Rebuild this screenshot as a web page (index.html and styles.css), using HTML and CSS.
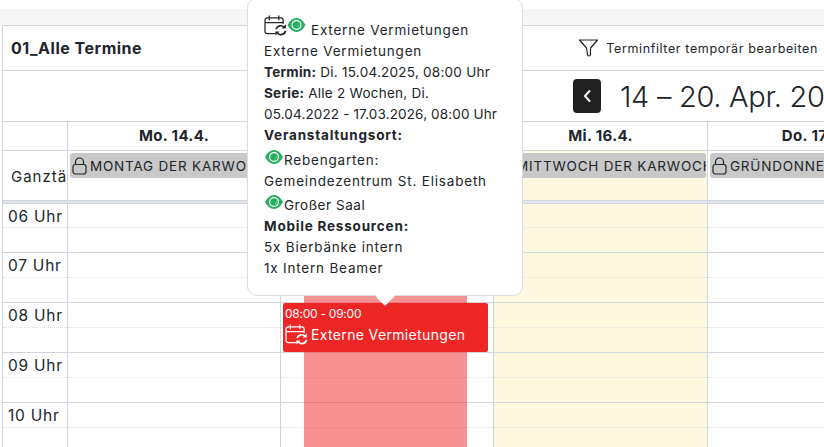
FILE: index.html
```html
<!DOCTYPE html>
<html lang="de">
<head>
<meta charset="utf-8">
<title>Kalender</title>
<link rel="stylesheet" href="styles.css">
</head>
<body>
<svg class="defs" width="0" height="0" aria-hidden="true">
  <symbol id="calsync" viewBox="0 0 24 22">
    <path d="M11 19.5H3.5A2.5 2.5 0 0 1 1 17V5.5A2.5 2.5 0 0 1 3.5 3h14A2.5 2.5 0 0 1 20 5.5V9M1 8h19M5.5 1v4M15.5 1v4" fill="none" stroke="currentColor" stroke-width="1.3" stroke-linecap="round"/>
    <path d="M12.6 15a5 5 0 0 1 8.4-2.2M22.6 16.5a5 5 0 0 1-8.6 2.4" fill="none" stroke="currentColor" stroke-width="1.8"/>
    <path d="M22.8 9.8v4.4h-4.4zM11.8 21.6v-4.4h4.4z" fill="currentColor"/>
  </symbol>
  <symbol id="eye" viewBox="0 0 18 14">
    <path d="M0 7C2.5 2.5 5.5 0 9 0s6.500 2.500 9 7c-2.500 4.500-5.500 7-9 7S2.500 11.500 0 7z" fill="#27ae60"/>
    <circle cx="9" cy="7" r="5" fill="#fff"/>
    <circle cx="9" cy="7" r="3.800" fill="#27ae60"/>
    <path d="M11.200 4.800a3 3 0 0 1-1.600 4.400 3.800 3.800 0 0 0 1.600-4.400z" fill="#fff"/>
  </symbol>
  <symbol id="lock" viewBox="0 0 15 18">
    <path d="M3.500 7.500V5a4 4 0 0 1 8 0v2.500" fill="none" stroke="currentColor" stroke-width="1.200"/>
    <rect x="1" y="7.500" width="13" height="9.500" rx="2.200" fill="none" stroke="currentColor" stroke-width="1.200"/>
  </symbol>
</svg>

<div class="page">
  <div class="band"></div>
  <div class="cal">
    <header class="titlebar">
      <h1 class="title">01_Alle Termine</h1>
      <button class="filter" type="button">
        <svg class="filter-icon" viewBox="0 0 20 18"><path d="M1 1h18l-7 8v6.500a1.500 1.500 0 0 1-3 0L8 9z" fill="none" stroke="currentColor" stroke-width="1.200" stroke-linejoin="round"/></svg>
        Terminfilter temporär bearbeiten
      </button>
    </header>
    <nav class="navbar">
      <button class="prev" type="button" aria-label="Zurück">
        <svg viewBox="0 0 10 14" width="10" height="14"><path d="M7.500 2 3 7l4.500 5" fill="none" stroke="#fff" stroke-width="2" stroke-linecap="round" stroke-linejoin="round"/></svg>
      </button>
      <h2 class="range">14 – 20. Apr. 2025</h2>
    </nav>

    <div class="grid head">
      <div class="corner"></div>
      <div class="dayname">Mo. 14.4.</div>
      <div class="dayname">Di. 15.4.</div>
      <div class="dayname">Mi. 16.4.</div>
      <div class="dayname">Do. 17.4.</div>
    </div>

    <div class="grid allday">
      <div class="allday-label">Ganztägig</div>
      <div class="allday-cell"><div class="chip"><svg class="lock"><use href="#lock"/></svg>MONTAG DER KARWOCHE</div></div>
      <div class="allday-cell"><div class="chip"><svg class="lock"><use href="#lock"/></svg>DIENSTAG DER KARWOCHE</div></div>
      <div class="allday-cell today"><div class="chip"><svg class="lock"><use href="#lock"/></svg>MITTWOCH DER KARWOCHE</div></div>
      <div class="allday-cell"><div class="chip"><svg class="lock"><use href="#lock"/></svg>GRÜNDONNERSTAG</div></div>
    </div>

    <div class="grid hours">
      <div class="col times">
        <div class="slot"><div class="half label">06 Uhr</div><div class="half"></div></div>
        <div class="slot"><div class="half label">07 Uhr</div><div class="half"></div></div>
        <div class="slot"><div class="half label">08 Uhr</div><div class="half"></div></div>
        <div class="slot"><div class="half label">09 Uhr</div><div class="half"></div></div>
        <div class="slot"><div class="half label">10 Uhr</div><div class="half"></div></div>
      </div>
      <div class="col">
        <div class="slot"><div class="half"></div><div class="half"></div></div>
        <div class="slot"><div class="half"></div><div class="half"></div></div>
        <div class="slot"><div class="half"></div><div class="half"></div></div>
        <div class="slot"><div class="half"></div><div class="half"></div></div>
        <div class="slot"><div class="half"></div><div class="half"></div></div>
      </div>
      <div class="col">
        <div class="slot"><div class="half"></div><div class="half"></div></div>
        <div class="slot"><div class="half"></div><div class="half"></div></div>
        <div class="slot"><div class="half"></div><div class="half"></div></div>
        <div class="slot"><div class="half"></div><div class="half"></div></div>
        <div class="slot"><div class="half"></div><div class="half"></div></div>
        <div class="blocked"></div>
        <div class="event">
          <div class="event-time">08:00 - 09:00</div>
          <div class="event-name"><svg class="event-icon"><use href="#calsync"/></svg>Externe Vermietungen</div>
        </div>
      </div>
      <div class="col today">
        <div class="slot"><div class="half"></div><div class="half"></div></div>
        <div class="slot"><div class="half"></div><div class="half"></div></div>
        <div class="slot"><div class="half"></div><div class="half"></div></div>
        <div class="slot"><div class="half"></div><div class="half"></div></div>
        <div class="slot"><div class="half"></div><div class="half"></div></div>
      </div>
      <div class="col">
        <div class="slot"><div class="half"></div><div class="half"></div></div>
        <div class="slot"><div class="half"></div><div class="half"></div></div>
        <div class="slot"><div class="half"></div><div class="half"></div></div>
        <div class="slot"><div class="half"></div><div class="half"></div></div>
        <div class="slot"><div class="half"></div><div class="half"></div></div>
      </div>
    </div>
  </div>

  <aside class="tip">
    <div class="tip-head">
      <svg class="tip-cal"><use href="#calsync"/></svg><svg class="tip-eye"><use href="#eye"/></svg><span>Externe Vermietungen</span>
    </div>
    <div class="line">Externe Vermietungen</div>
    <div class="line mid"><b>Termin:</b> Di. 15.04.2025, 08:00 Uhr</div>
    <div class="line mid"><b>Serie:</b> Alle 2 Wochen, Di.</div>
    <div class="line tight">05.04.2022 - 17.03.2026, 08:00 Uhr</div>
    <div class="line"><b>Veranstaltungsort:</b></div>
    <div class="line eye-line first"><svg class="eye"><use href="#eye"/></svg><span>Rebengarten:</span></div>
    <div class="line">Gemeindezentrum St. Elisabeth</div>
    <div class="line eye-line saal"><svg class="eye"><use href="#eye"/></svg><span>Großer Saal</span></div>
    <div class="line"><b>Mobile Ressourcen:</b></div>
    <div class="line">5x Bierbänke intern</div>
    <div class="line">1x Intern Beamer</div>
  </aside>
</div>
</body>
</html>
```
FILE: styles.css
```css
* { box-sizing: border-box; }
html, body { margin: 0; padding: 0; background: #fff; }
body {
  font-family: Inter, "Noto Sans", "Liberation Sans", sans-serif;
  color: #212529;
  overflow: hidden;
  width: 824px;
  height: 447px;
}
.defs { position: absolute; }
.page { position: relative; width: 824px; height: 447px; overflow: hidden; padding-top: 9px; }
.band { height: 16px; background: #f6f6f6; }
.cal { margin-left: 2px; width: 1100px; border-left: 1px solid #d0d4dc; border-top: 1px solid #d0d4dc; }

.titlebar {
  width: 815px; height: 44px; display: flex; align-items: center; justify-content: space-between;
  padding: 0 0 0 8px;
}
.title { margin: 0; font-size: 16px; font-weight: 700; letter-spacing: 0.5px; }
.filter {
  display: flex; align-items: center; gap: 7px; border: 0; background: none; padding: 0;
  font: inherit; font-size: 12.500px; letter-spacing: 0.62px; color: #212529;
}
.filter-icon { width: 21px; height: 18px; }

.navbar {
  height: 52px; display: flex; align-items: center; gap: 19px; padding-left: 570px;
  border-top: 1px solid #d0d4dc; border-bottom: 1px solid #d0d4dc;
}
.prev {
  width: 28px; height: 34px; border: 0; border-radius: 4px; background: #212121;
  display: flex; align-items: center; justify-content: center; padding: 0;
}
.range { margin: 0; font-size: 29px; font-weight: 300; white-space: nowrap; letter-spacing: -0.3px; }

.grid { display: grid; grid-template-columns: 65px 213px 213px 214px 213px 213px; }
.head { height: 29px; border-bottom: 1px solid #d0d4dc; }
.corner { border-right: 1px solid #d0d4dc; }
.dayname {
  border-right: 1px solid #d0d4dc; text-align: center; font-size: 15px; font-weight: 700;
  line-height: 28px; letter-spacing: 0.35px;
}

.allday { height: 52px; }
.allday-label {
  border-right: 1px solid #d0d4dc; padding: 16px 0 0 8px; overflow: hidden;
  font-size: 15px; white-space: nowrap; letter-spacing: 1px;
  border-bottom: 2px solid #e2e6ec; box-shadow: inset 0 -1px 0 #d0d4dc;
}
.allday-cell {
  border-right: 1px solid #d0d4dc; padding: 2px 1px 0 2px; overflow: hidden;
  border-bottom: 2px solid #e2e6ec; box-shadow: inset 0 -1px 0 #d0d4dc;
}
.today { background: #fff8e0; }
.chip {
  height: 25px; background: #c8c8c8; border-radius: 3px; padding-left: 2px; display: flex; align-items: center;
  font-size: 13.500px; letter-spacing: 0.8px; white-space: nowrap; overflow: hidden;
}
.lock { width: 15px; height: 18px; margin-right: 3px; flex: none; color: #212529; }

.hours { height: 260px; border-top: 1px solid #d0d4dc; }
.col { position: relative; border-right: 1px solid #d0d4dc; }
.slot { height: 50px; border-bottom: 1px solid #d0d4dc; }
.slot:first-child { height: 49px; }
.half { height: 24px; }
.half:first-child { height: 25px; border-bottom: 1px dotted #e0e0e0; }
.slot:first-child .half:first-child { height: 24px; }
.label { font-size: 15.500px; line-height: 24px; padding: 1px 0 0 5px; letter-spacing: 0.75px; white-space: nowrap; }

.blocked {
  position: absolute; left: 23px; top: 0; bottom: 0; width: 163px; background: rgba(238, 38, 38, 0.5);
}
.event {
  position: absolute; left: 2px; top: 99px; width: 205px; height: 49px; background: #ee2626;
  border-radius: 2px; color: #fff; padding: 2px 2px;
}
.event-time { font-size: 12px; line-height: 17px; letter-spacing: -0.25px; }
.event-name { display: flex; align-items: center; gap: 3px; font-size: 14px; letter-spacing: 0.35px; margin-top: 2px; white-space: nowrap; }
.event-icon { width: 23px; height: 21px; flex: none; }

.tip {
  position: absolute; left: 247px; top: -2px; width: 276px; height: 298px; background: #fff;
  border: 1px solid #dcdcdc; border-radius: 10px; padding: 15px 0 0 16px; font-size: 13.500px; letter-spacing: 0.8px;
}
.tip::after {
  content: ""; position: absolute; left: 130px; bottom: -8px; width: 14px; height: 14px;
  background: #fff; transform: rotate(45deg); border-radius: 1px;
}
.tip-head { height: 27px; display: flex; align-items: flex-start; }
.tip-head span { margin: 6px 0 0 5px; line-height: 21px; }
.tip-cal { width: 23px; height: 21px; color: #212529; flex: none; margin-top: 1px; }
.tip-eye { width: 19px; height: 14px; margin-top: 4px; flex: none; }
.line { line-height: 21px; white-space: nowrap; }
.mid { letter-spacing: 0.25px; }
.tight { letter-spacing: 0.14px; }
.saal { letter-spacing: 0.55px; }
.eye-line { display: flex; align-items: flex-end; height: 24px; }
.eye-line.first { height: 25px; }
.eye { width: 18px; height: 14px; margin: 0 1px 7px 1px; flex: none; }
```
